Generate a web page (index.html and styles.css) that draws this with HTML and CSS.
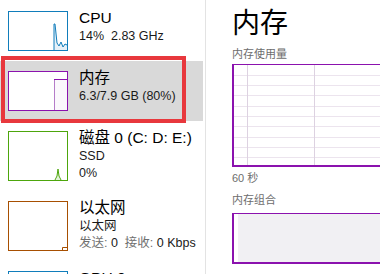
FILE: index.html
```html
<!DOCTYPE html>
<html lang="zh-CN">
<head>
<meta charset="utf-8">
<title>任务管理器 - 内存</title>
<link rel="stylesheet" href="styles.css">
</head>
<body>
<div class="app">
  <div class="sidebar">
    <div class="row">
      <div class="thumb thumb-cpu">
        <svg viewBox="0 0 58 38" width="58" height="38">
          <path class="cpu-fill" d="M45,38 L45,12 L46,12 L48,31 L50,34 L52,30 L54,35 L56,32 L58,33 L58,38 Z"/>
          <path class="cpu-line" d="M45,38 L45,12 L46,12 L48,31 L50,34 L52,30 L54,35 L56,32 L58,33"/>
        </svg>
      </div>
      <div class="info">
        <div class="title">CPU</div>
        <div class="sub">14%&nbsp; 2.83 GHz</div>
      </div>
    </div>
    <div class="row selected">
      <div class="thumb thumb-mem">
        <svg viewBox="0 0 58 38" width="58" height="38">
          <rect class="mem-fill" x="45" y="7" width="13" height="31"/>
          <path class="mem-left" d="M45.5,38 V7.5"/>
          <path class="mem-top" d="M45,7.5 H58"/>
        </svg>
      </div>
      <div class="info">
        <div class="title">内存</div>
        <div class="sub">6.3/7.9 GB (80%)</div>
      </div>
    </div>
    <div class="row">
      <div class="thumb tall thumb-disk">
        <svg viewBox="0 0 58 48" width="58" height="48">
          <path class="disk-fill" d="M47,48 L48,44 L49,37 L50,44 L51,48 Z"/>
          <path class="disk-line" d="M46,48 L48,44 L49,37 L50,44 L52,48"/>
        </svg>
      </div>
      <div class="info">
        <div class="title">磁盘 0 (C: D: E:)</div>
        <div class="sub">SSD</div>
        <div class="sub">0%</div>
      </div>
    </div>
    <div class="row">
      <div class="thumb tall thumb-net">
        <svg viewBox="0 0 58 48" width="58" height="48">
          <path class="net-line" d="M53.5,48 V45.5 H58"/>
        </svg>
      </div>
      <div class="info">
        <div class="title">以太网</div>
        <div class="sub">以太网</div>
        <div class="sub"><span class="muted">发送:</span> 0&nbsp; <span class="muted">接收:</span> 0 Kbps</div>
      </div>
    </div>
    <div class="row">
      <div class="thumb thumb-gpu"></div>
      <div class="info">
        <div class="title">GPU 0</div>
      </div>
    </div>
    <div class="highlight"></div>
  </div>
  <div class="main">
    <div class="heading">内存</div>
    <div class="label first">内存使用量</div>
    <div class="graph">
      <svg class="grid" viewBox="0 0 200 101" width="200" height="101">
        <path class="hline" d="M0,10.5 H200 M0,20.5 H200 M0,30.5 H200 M0,41.5 H200 M0,51.5 H200 M0,61.5 H200 M0,72.5 H200 M0,82.5 H200 M0,92.5 H200"/>
        <path class="vline" d="M13.5,0 V101 M80.5,0 V101 M147.5,0 V101"/>
      </svg>
    </div>
    <div class="label time">60 秒</div>
    <div class="label comp">内存组合</div>
    <div class="composition">
      <div class="comp-fill"></div>
    </div>
  </div>
</div>
</body>
</html>
```

FILE: styles.css
```css
* {
  box-sizing: border-box;
}

html, body {
  margin: 0;
  padding: 0;
  background: #ffffff;
}

body {
  width: 380px;
  height: 274px;
  overflow: hidden;
  font-family: "Liberation Sans", "Noto Sans CJK SC", sans-serif;
  color: #000000;
}

.app {
  display: flex;
  height: 274px;
  overflow: hidden;
}

.sidebar {
  position: relative;
  width: 206px;
  flex: none;
  padding: 1px 2px 0 0;
  border-right: 1px solid #e3e3e3;
  display: flex;
  flex-direction: column;
}

.row {
  display: flex;
  align-items: flex-start;
  gap: 11px;
  padding: 10px 0 10px 8px;
  flex: none;
}

.row.selected {
  background: #d9d9d9;
}

.thumb {
  width: 60px;
  height: 40px;
  flex: none;
  border: 1px solid #117dbb;
  background: #ffffff;
}

.thumb svg {
  display: block;
}

.thumb.tall {
  height: 50px;
}

.thumb-cpu {
  border-color: #117dbb;
}

.cpu-fill {
  fill: #e7f1f8;
}

.cpu-line {
  fill: none;
  stroke: #117dbb;
  stroke-width: 1;
}

.thumb-mem {
  border-color: #8b12ae;
}

.mem-fill {
  fill: #fbf8fc;
}

.mem-left {
  stroke: #b57cc9;
  stroke-width: 1;
}

.mem-top {
  stroke: #8b12ae;
  stroke-width: 1;
}

.thumb-disk {
  border-color: #4da60c;
}

.disk-fill {
  fill: #e4f2da;
}

.disk-line {
  fill: none;
  stroke: #4da60c;
  stroke-width: 1;
}

.thumb-net {
  border-color: #a74f01;
}

.net-line {
  fill: none;
  stroke: #a74f01;
  stroke-width: 1;
}

.thumb-gpu {
  border-color: #117dbb;
}

.info {
  display: flex;
  flex-direction: column;
  margin-top: -4px;
  margin-bottom: -6px;
}

.title {
  font-size: 15.5px;
  line-height: 21px;
  white-space: nowrap;
}

.sub {
  font-size: 12.5px;
  line-height: 17px;
  white-space: nowrap;
  color: #1a1a1a;
}

.muted {
  color: #707070;
}

.highlight {
  position: absolute;
  left: 1px;
  top: 56px;
  width: 185px;
  height: 67px;
  border: 4px solid #e8383d;
  pointer-events: none;
}

.main {
  flex: 1;
  min-width: 0;
  overflow: hidden;
  padding: 6px 0 0 26px;
  display: flex;
  flex-direction: column;
}

.heading {
  font-size: 28px;
  line-height: 36px;
  white-space: nowrap;
}

.label {
  font-size: 11px;
  line-height: 15px;
  color: #6d6d6d;
  white-space: nowrap;
  margin-top: 4px;
}

.label.first {
  margin-top: 5px;
}

.graph {
  margin-top: 2px;
  width: 200px;
  height: 103px;
  flex: none;
  border: 2px solid #8b12ae;
  border-right: none;
  border-top-width: 1px;
  background: #ffffff;
  overflow: hidden;
}

.grid {
  display: block;
}

.hline {
  stroke: #ece4ee;
  stroke-width: 1;
}

.vline {
  stroke: #ddd2e1;
  stroke-width: 1;
}

.label.time {
  margin-top: 4px;
}

.label.comp {
  margin-top: 7px;
}

.composition {
  margin-top: 5px;
  width: 200px;
  height: 51px;
  flex: none;
  border: 2px solid #8b12ae;
  border-right: none;
  border-top-width: 1px;
  padding-left: 4px;
  background: #ffffff;
  display: flex;
}

.comp-fill {
  flex: 1;
  background: #f1f0f3;
}
```
